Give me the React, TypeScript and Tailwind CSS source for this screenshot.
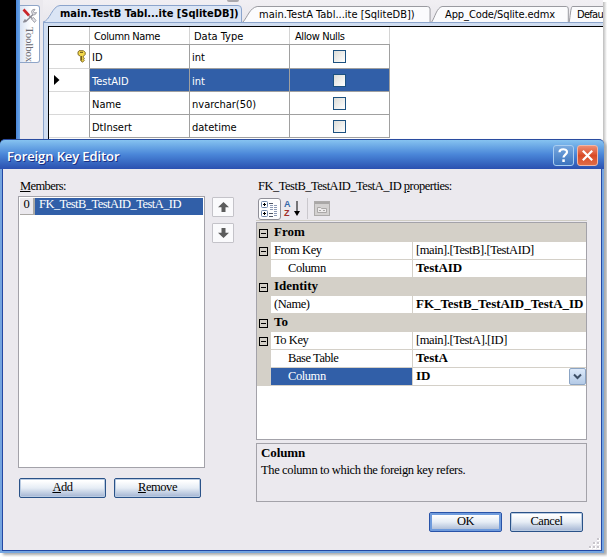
import type { ReactNode } from 'react';
import clsx from 'clsx';

type TableColumn = {
    name: string;
    type: string;
    isKey?: boolean;
    selected?: boolean;
};

type PropertyRowProps = {
    label: string;
    value?: string;
    category?: boolean;
    expandable?: boolean;
    indent?: boolean;
    bold?: boolean;
    selected?: boolean;
};

const tableColumns: TableColumn[] = [
    { name: 'ID', type: 'int', isKey: true },
    { name: 'TestAID', type: 'int', selected: true },
    { name: 'Name', type: 'nvarchar(50)' },
    { name: 'DtInsert', type: 'datetime' },
];

const properties: PropertyRowProps[] = [
    { label: 'From', category: true },
    { label: 'From Key', value: '[main].[TestB].[TestAID]', expandable: true },
    { label: 'Column', value: 'TestAID', indent: true, bold: true },
    { label: 'Identity', category: true },
    { label: '(Name)', value: 'FK_TestB_TestAID_TestA_ID', bold: true },
    { label: 'To', category: true },
    { label: 'To Key', value: '[main].[TestA].[ID]', expandable: true },
    { label: 'Base Table', value: 'TestA', indent: true, bold: true },
    { label: 'Column', value: 'ID', indent: true, bold: true, selected: true },
];

const ToolboxTab = () => (
    <div className="mt-[5px] flex h-[58px] w-5 shrink-0 flex-col items-center rounded-r-[3px] border border-l-0 border-[#8fa5c8] bg-linear-to-r from-[#d9e3f3] to-white to-60%">
        <svg className="mt-[2px] shrink-0" width="15" height="16" viewBox="0 0 15 16" fill="none">
            <path d="M11 6.500 3.200 14M3.500 11.500 1.500 14.500" stroke="#8d8d97" strokeWidth="1.500" />
            <path d="M9.500 3.500C10 1.500 12 1 13 1.500L11.500 3.500 12.500 5 14.500 4.500C14 6.500 12 7.500 10.500 6.500Z" fill="#dedee4" stroke="#8d8d97" strokeWidth=".8" />
            <path d="m1.500 1.500 5.500 6" stroke="#c9252b" strokeWidth="2.600" />
            <path d="m7 7.500 3 3" stroke="#8d8d97" strokeWidth="1.500" />
            <path d="m9.500 11 2-1.500 2.500 3-1.500 2Z" fill="#e4e4e9" stroke="#8d8d97" strokeWidth=".8" />
        </svg>
        <span className="mt-[3px] font-['Liberation_Serif',serif] text-[11px] leading-[14px] tracking-[-0.2px] text-[#6a6a72] [writing-mode:vertical-rl]">
            Toolbox
        </span>
    </div>
);

type DocumentTabProps = {
    title: string;
    className: string;
};

const DocumentTab = ({ title, className }: DocumentTabProps) => (
    <div className={clsx('relative h-[16px] shrink-0', className)}>
        <svg className="absolute inset-0 size-full" viewBox="0 0 100 16" preserveAspectRatio="none">
            <path
                d="M.5 16C3 11 4 2 8 .5H98Q99.5.5 99.5 3V16"
                fill="#fbfbfd"
                stroke="#9a9aa0"
                vectorEffect="non-scaling-stroke"
            />
        </svg>
        <span className="relative block leading-[17px] whitespace-nowrap">{title}</span>
    </div>
);

const KeyIcon = () => (
    <svg width="9" height="13" viewBox="0 0 9 13">
        <path
            d="M2 .7h4.500l1.700 1.700v2L6.400 6.300v1l1 .9-1 1 1 1-1.800 2-1.900-1.500V6.500L1 4.600V2Z"
            fill="#f3d84c"
            stroke="#77601c"
            strokeWidth=".9"
        />
        <path d="M3 2.400h3M4.600 6v4.500" stroke="#6b5518" />
    </svg>
);

const DesignerTable = () => (
    <div className="w-[341px] text-[11px]">
        <div className="flex h-[18px] border-b border-[#a0a0a0] leading-[20px]">
            <div className="w-[41px] border-r border-[#c8c8c8]" />
            <div className="w-[100px] border-r border-[#d4d4d4] pl-[4px] tracking-[-0.4px]">Column Name</div>
            <div className="w-[100px] border-r border-[#d4d4d4] pl-[4px]">Data Type</div>
            <div className="w-[100px] border-r border-[#d4d4d4] pl-[5px] tracking-[-0.4px]">Allow Nulls</div>
        </div>
        {tableColumns.map((column, index) => (
            <div key={column.name} className={clsx('flex', index === 0 ? 'h-6' : 'h-[23px]')}>
                <div className="flex w-[41px] items-center border-r border-b border-[#a0a0a0] border-b-[#d8d8d8]">
                    {column.isKey && (
                        <span className="ml-[28px]">
                            <KeyIcon />
                        </span>
                    )}
                    {column.selected && (
                        <svg className="ml-[5px]" width="6" height="10" viewBox="0 0 6 10">
                            <path d="M0 0 5.500 5 0 10Z" />
                        </svg>
                    )}
                </div>
                <div
                    className={clsx(
                        'flex border-b border-[#a0a0a0] leading-[25px]',
                        column.selected && 'bg-[#315fa8] text-white',
                    )}
                >
                    <div className="w-[100px] border-r border-[#a0a0a0] pl-[2px]">{column.name}</div>
                    <div className="w-[100px] border-r border-[#a0a0a0] pl-[2px]">{column.type}</div>
                    <div className="w-[100px] border-r border-[#a0a0a0] pt-[5px] pl-[43px]">
                        <div className="size-[13px] border border-[#1c5180] bg-linear-135 from-[#dcdcd7] to-white" />
                    </div>
                </div>
            </div>
        ))}
    </div>
);

const DesignerWindow = () => (
    <div className="flex h-[160px] bg-black font-['DejaVu_Sans_Condensed','DejaVu_Sans',sans-serif] text-[11px] text-black">
        <div className="ml-4 w-1 shrink-0 bg-linear-to-r from-[#4a86d8] to-[#6aa5e8]" />
        <div className="flex w-[583px] shrink-0 bg-[#ebe9ee]">
            <ToolboxTab />
            <div className="flex min-w-0 grow flex-col pl-[3px]">
                <div className="relative flex h-[22px] items-end overflow-hidden bg-linear-to-b from-[#f1eff3] to-[#e9e7ec]">
                    <div className="absolute top-0 left-[184px] h-[2px] w-[12px] rounded-b-full bg-[#aaa8ad]" />
                    <div className="relative h-[17px] w-[199px] shrink-0">
                        <svg className="absolute inset-0 size-full" viewBox="0 0 199 17">
                            <path
                                d="M0 17C7 16 9 1 17 .5H195Q198.500.5 198.500 4V17"
                                fill="#dbe5f5"
                                stroke="#8ba4cc"
                            />
                        </svg>
                        <span className="relative block pl-[17px] leading-[17px] font-bold whitespace-nowrap">
                            main.TestB Tabl...ite [SqliteDB])
                        </span>
                    </div>
                    <DocumentTab title="main.TestA Tabl...ite [SqliteDB])" className="w-[189px] pl-[17px]" />
                    <DocumentTab
                        title="App_Code/Sqlite.edmx"
                        className="w-[138px] pl-[14px] tracking-[-0.1px]"
                    />
                    <DocumentTab title="Defau" className="w-[40px] pl-[8px] tracking-[-0.7px]" />
                </div>
                <div className="grow border-t border-l border-[#8ba4cc] bg-[#d0ddf0] pt-[3px] pl-[4px]">
                    <div className="h-full border-t border-l border-black bg-white">
                        <DesignerTable />
                    </div>
                </div>
            </div>
        </div>
        <div className="grow bg-white pt-[2px]">
            <div className="h-full bg-linear-to-r from-[#bdbdbd] to-white" />
        </div>
    </div>
);

const Expander = () => (
    <svg width="9" height="9" viewBox="0 0 9 9" fill="none" stroke="#000">
        <rect x=".5" y=".5" width="8" height="8" />
        <path d="M2 4.500h5" />
    </svg>
);

const PropertyRow = ({ label, value, category, expandable, indent, bold, selected }: PropertyRowProps) => (
    <div className="flex h-[18px] leading-[16px]">
        <div className="w-[14px] shrink-0 bg-[#d4d0c8] pt-[5px] pl-[2px]">
            {(category || expandable) && <Expander />}
        </div>
        {category ? (
            <div className="grow bg-[#d4d0c8] pl-[3px] text-[13px] font-bold tracking-normal">{label}</div>
        ) : (
            <>
                <div
                    className={clsx(
                        'w-[142px] shrink-0 border-r border-b border-[#d4d0c8]',
                        indent ? 'pl-[17px]' : 'pl-[3px]',
                        selected && 'bg-[#315fa8] text-white',
                    )}
                >
                    {label}
                </div>
                <div className="flex min-w-0 grow justify-between border-b border-[#d4d0c8] pl-[3px]">
                    <span className={clsx('whitespace-nowrap', bold && 'text-[13px] font-bold tracking-[-0.04px]')}>
                        {value}
                    </span>
                    {selected && (
                        <span className="flex size-[17px] items-center justify-center rounded-[2px] border border-[#8ba4c4] bg-linear-to-b from-[#dce9fa] to-[#b4cae6]">
                            <svg width="9" height="7" viewBox="0 0 9 7" fill="none">
                                <path d="m1 1.500 3.500 3.500L8 1.500" stroke="#3d4f67" strokeWidth="2" />
                            </svg>
                        </span>
                    )}
                </div>
            </>
        )}
    </div>
);

type DialogButtonProps = {
    children: ReactNode;
    className: string;
    primary?: boolean;
};

const DialogButton = ({ children, className, primary }: DialogButtonProps) => (
    <button
        type="button"
        className={clsx(
            'h-5 rounded-[2px] border bg-linear-to-b from-white from-10% via-[#e6edf5] via-50% to-[#a3b4d2] pb-[2px] text-center leading-[16px]',
            primary
                ? 'border-[#2853a8] shadow-[inset_0_0_0_2px_#6f9bdc]'
                : 'border-[#2a5288] shadow-[inset_0_0_0_1px_#b9cbe2]',
            className,
        )}
    >
        {children}
    </button>
);

const MoveButton = ({ down }: { down?: boolean }) => (
    <button
        type="button"
        className="flex h-5 w-[22px] items-center justify-center rounded-[1px] border border-[#c4c3c9] bg-[#fafafc]"
    >
        <svg className={clsx(down && 'rotate-180')} width="11" height="10" viewBox="0 0 11 10">
            <path d="M5.500 0 11 5.200H7.500V10h-4V5.200H0Z" fill="#5c5c5c" />
        </svg>
    </button>
);

const PropertyToolbar = () => (
    <div className="flex h-6 items-start border-b border-[#d0cdc4] pt-px pl-[2px]">
        <div className="flex h-[22px] w-[23px] items-center justify-center rounded-[3px] border border-[#8f8f98] bg-[#fdfdfe]">
            <svg width="17" height="17" viewBox="0 0 17 17" fill="none">
                <rect x=".5" y=".5" width="6" height="6" rx="1" fill="#fff" stroke="#6f86a8" />
                <path d="M2 3.500h3M3.500 2v3" stroke="#000" />
                <rect x=".5" y="9.500" width="6" height="6" rx="1" fill="#fff" stroke="#6f86a8" />
                <path d="M2 12.500h3M3.500 11v3" stroke="#000" />
                <path
                    d="M8 2.500h4M8 12.500h4M8 15.500h4"
                    stroke="#4d5566"
                />
                <path
                    d="M9 4.500h3M13 4.500h3M9 6.500h3M13 6.500h3M9 8.500h3M13 8.500h3M13 10.500h3M13 12.500h3M13 14.500h3"
                    stroke="#8b99b5"
                />
            </svg>
        </div>
        <div className="ml-[3px] flex h-[21px] w-[17px] items-center">
            <div className="flex w-[8px] flex-col font-['Liberation_Sans',sans-serif] text-[9px] leading-[9px] font-bold tracking-normal">
                <span className="text-[#3467a8]">A</span>
                <span className="text-[#a02f2b]">Z</span>
            </div>
            <svg className="ml-[2px]" width="6" height="15" viewBox="0 0 6 15">
                <path d="M2.500 0h1v10H6l-3 5-3-5h2.500Z" />
            </svg>
        </div>
        <div className="ml-[6px] h-[21px] w-px bg-[#cac8cd]" />
        <svg className="mt-[3px] ml-[6px]" width="16" height="15" viewBox="0 0 16 15" fill="none">
            <rect x=".5" y=".5" width="15" height="14" fill="#d3d1d0" stroke="#adabaa" />
            <path d="M1 2h14" stroke="#a9a7a6" strokeWidth="2" />
            <path d="M3.500 11.500v-5h3l1 1h5v4ZM5 9.500h2M9 9.500h2" fill="#eeecec" stroke="#aaa8a7" />
        </svg>
    </div>
);

const TitleBar = () => (
    <div className="flex h-[30px] items-center rounded-t-[5px] border-t border-[#2a4ca0] bg-linear-to-b from-[#86c3f0] via-[#4a86d8] via-50% to-[#2b50b0] pr-[6px] pl-[7px]">
        <h1 className="grow pt-[3px] font-['Open_Sans','Noto_Sans',sans-serif] text-[13px] leading-[20px] font-semibold tracking-[-0.1px] text-white [text-shadow:1px_1px_0_#1b2f83]">
            Foreign Key Editor
        </h1>
        <button
            type="button"
            className="mt-px mr-[3px] flex size-[21px] items-center justify-center rounded-[3px] border border-[#a9cdf0] bg-linear-to-b from-[#78a9df] to-[#3b73be]"
        >
            <svg width="11" height="14" viewBox="0 0 11 14" fill="none">
                <path d="M1.500 4.300C1.500.2 9 .4 9 4c0 2.400-3.500 2.800-3.500 5.500" stroke="#fff" strokeWidth="2.200" />
                <path d="M4.300 11.300h2.500V14H4.300Z" fill="#fff" />
            </svg>
        </button>
        <button
            type="button"
            className="mt-px flex size-[21px] items-center justify-center rounded-[3px] border border-[#efb8a8] bg-linear-to-b from-[#ec8d73] via-[#d94a25] via-50% to-[#df6b45]"
        >
            <svg width="11" height="11" viewBox="0 0 11 11" fill="none">
                <path d="m.8.8 9.400 9.400M10.200.8.8 10.200" stroke="#fff" strokeWidth="2.200" />
            </svg>
        </button>
    </div>
);

const MembersPanel = () => (
    <div className="flex w-[187px] shrink-0 flex-col">
        <label className="h-[19px] pl-[2px] leading-[18px] tracking-[-0.6px]">
            <u>M</u>embers:
        </label>
        <div className="h-[272px] border border-[#a3a2a9] bg-white p-px">
            <div className="flex h-[17px] leading-[13px]">
                <span className="w-[15px] border-r-2 border-b border-[#aaa8a5] bg-[#ebe9ee] text-center">0</span>
                <span className="grow bg-[#315fa8] pl-1 tracking-[-0.55px] text-white">
                    FK_TestB_TestAID_TestA_ID
                </span>
            </div>
        </div>
        <div className="mt-[10px] flex gap-2 pl-px">
            <DialogButton className="w-[87px]">
                <u>A</u>dd
            </DialogButton>
            <DialogButton className="w-[87px]">
                <u>R</u>emove
            </DialogButton>
        </div>
    </div>
);

const PropertiesPanel = () => (
    <div className="flex w-[331px] shrink-0 flex-col">
        <label className="h-5 pl-[2px] leading-[18px] tracking-[-0.5px]">
            FK_TestB_TestAID_TestA_ID <u>p</u>roperties:
        </label>
        <PropertyToolbar />
        <div className="mt-px h-[218px] border border-[#a3a2a9] bg-white">
            <div className="h-px bg-[#d4d0c8]" />
            {properties.map((property, index) => (
                <PropertyRow key={index} {...property} />
            ))}
        </div>
        <div className="mt-[3px] h-[59px] border border-[#a3a2a9] pl-[4px]">
            <p className="pt-px text-[13px] leading-[15px] font-bold tracking-[-0.1px]">Column</p>
            <p className="mt-[2px] leading-[16px] tracking-[-0.37px]">The column to which the foreign key refers.</p>
        </div>
        <div className="mt-[10px] flex justify-end gap-2 pr-[4px]">
            <DialogButton className="w-[73px]" primary>
                OK
            </DialogButton>
            <DialogButton className="w-[73px]">Cancel</DialogButton>
        </div>
    </div>
);

const ForeignKeyDialog = () => (
    <section className="absolute top-[139px] left-0 h-[414px] w-[604px] rounded-t-[6px] bg-[#75a5e0] px-[2px] pb-[2px] font-['Liberation_Serif',serif] text-[12.5px] tracking-[-0.43px] text-black shadow-[3px_2px_3px_#aaaaaa]">
        <div className="-mx-[2px]">
            <TitleBar />
        </div>
        <div className="relative flex h-[382px] border border-t-0 border-[#2448a4] bg-[#ebe9ee] pt-[8px] pl-[15px]">
            <MembersPanel />
            <div className="mr-[22px] ml-[7px] flex flex-col gap-[6px] pt-5">
                <MoveButton />
                <MoveButton down />
            </div>
            <PropertiesPanel />
            <svg className="absolute right-0 bottom-0" width="12" height="12" viewBox="0 0 12 12">
                <path d="M8 0h3v3H8ZM4 4h3v3H4ZM8 4h3v3H8ZM0 8h3v3H0ZM4 8h3v3H4ZM8 8h3v3H8Z" fill="#fff" />
                <path d="M8 0h2v2H8ZM4 4h2v2H4ZM8 4h2v2H8ZM0 8h2v2H0ZM4 8h2v2H4ZM8 8h2v2H8Z" fill="#c9c6cc" />
            </svg>
        </div>
    </section>
);

export default function App() {
    return (
        <main className="relative h-[557px] w-[607px] overflow-hidden bg-white">
            <DesignerWindow />
            <ForeignKeyDialog />
        </main>
    );
}
